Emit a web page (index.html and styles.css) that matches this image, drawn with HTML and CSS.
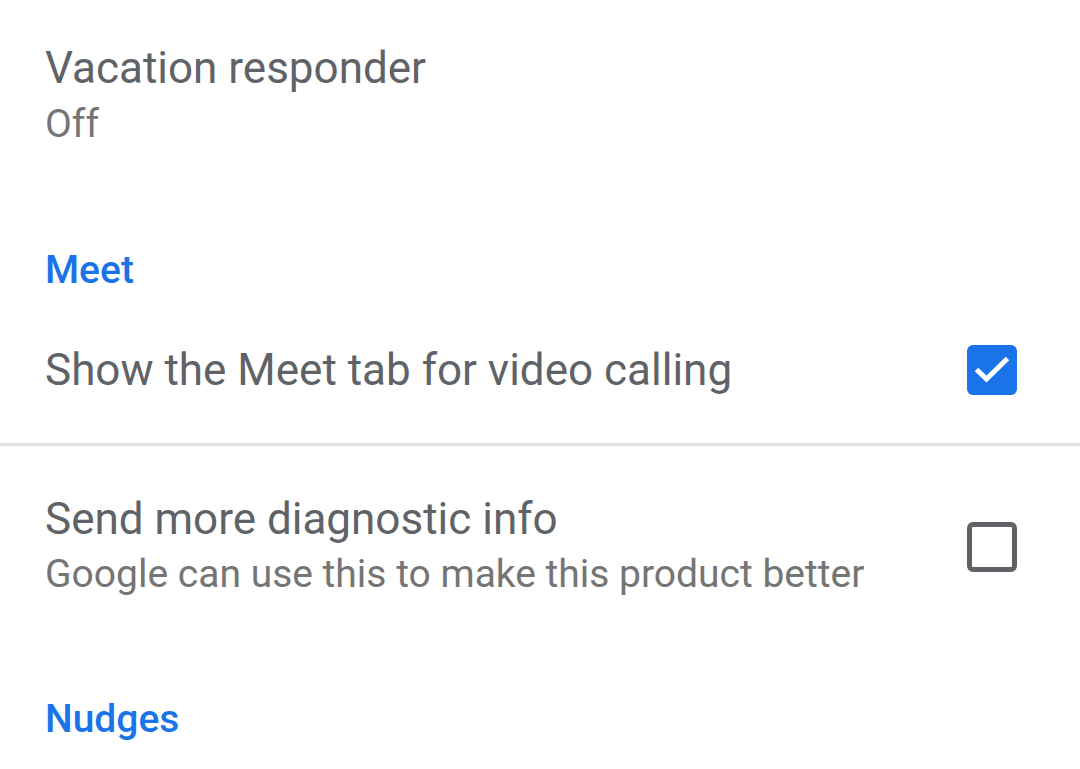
FILE: index.html
```html
<!DOCTYPE html>
<html lang="en">
<head>
    <meta charset="UTF-8">
    <title>Settings</title>
    <link rel="stylesheet" href="styles.css">
</head>
<body>
<div class="settings">
    <!--自动回复-->
    <div class="item first">
        <div class="text">
            <div class="title">Vacation responder</div>
            <div class="sub">Off</div>
        </div>
    </div>

    <div class="heading">Meet</div>
    <div class="item single">
        <div class="text">
            <div class="title">Show the Meet tab for video calling</div>
        </div>
        <span class="check checked">
            <svg viewBox="0 0 50 50" width="50" height="50">
                <path d="M9.5 24.5 L19.5 34 L40.5 13.5" fill="none" stroke="#fff" stroke-width="5"/>
            </svg>
        </span>
    </div>
    <div class="divider"></div>

    <div class="item two">
        <div class="text">
            <div class="title">Send more diagnostic info</div>
            <div class="sub">Google can use this to make this product better</div>
        </div>
        <span class="check"></span>
    </div>

    <div class="heading">Nudges</div>
</div>
</body>
</html>
```

FILE: styles.css
```css
* {
    margin: 0;
    padding: 0;
}

body {
    background-color: #fff;
    font-family: Roboto, "Noto Sans", sans-serif;
    overflow: hidden;
}

.settings {
    width: 1080px;
    padding-top: 41px;
}

.item {
    display: flex;
    align-items: center;
    justify-content: space-between;
    padding: 0 63px 0 45px;
}

.item.first {
    padding-bottom: 90px;
}

.item.first .sub {
    line-height: 58px;
}

.item.single {
    padding-top: 46px;
    padding-bottom: 46px;
}

.item.two {
    padding-top: 46px;
    padding-bottom: 90px;
}

.title {
    font-size: 44px;
    line-height: 54px;
    color: #5f6368;
}

.sub {
    font-size: 39px;
    line-height: 56px;
    color: #757575;
}

.heading {
    padding-left: 45px;
    font-size: 39px;
    font-weight: 500;
    line-height: 54px;
    color: #1a73e8;
}

.divider {
    height: 3px;
    background-color: #e2e2e2;
}

.check {
    width: 50px;
    height: 50px;
    box-sizing: border-box;
    border: 5.5px solid #5f6368;
    border-radius: 6px;
    display: block;
}

.check.checked {
    border: none;
    background-color: #1a73e8;
}

.check svg {
    display: block;
}
```
